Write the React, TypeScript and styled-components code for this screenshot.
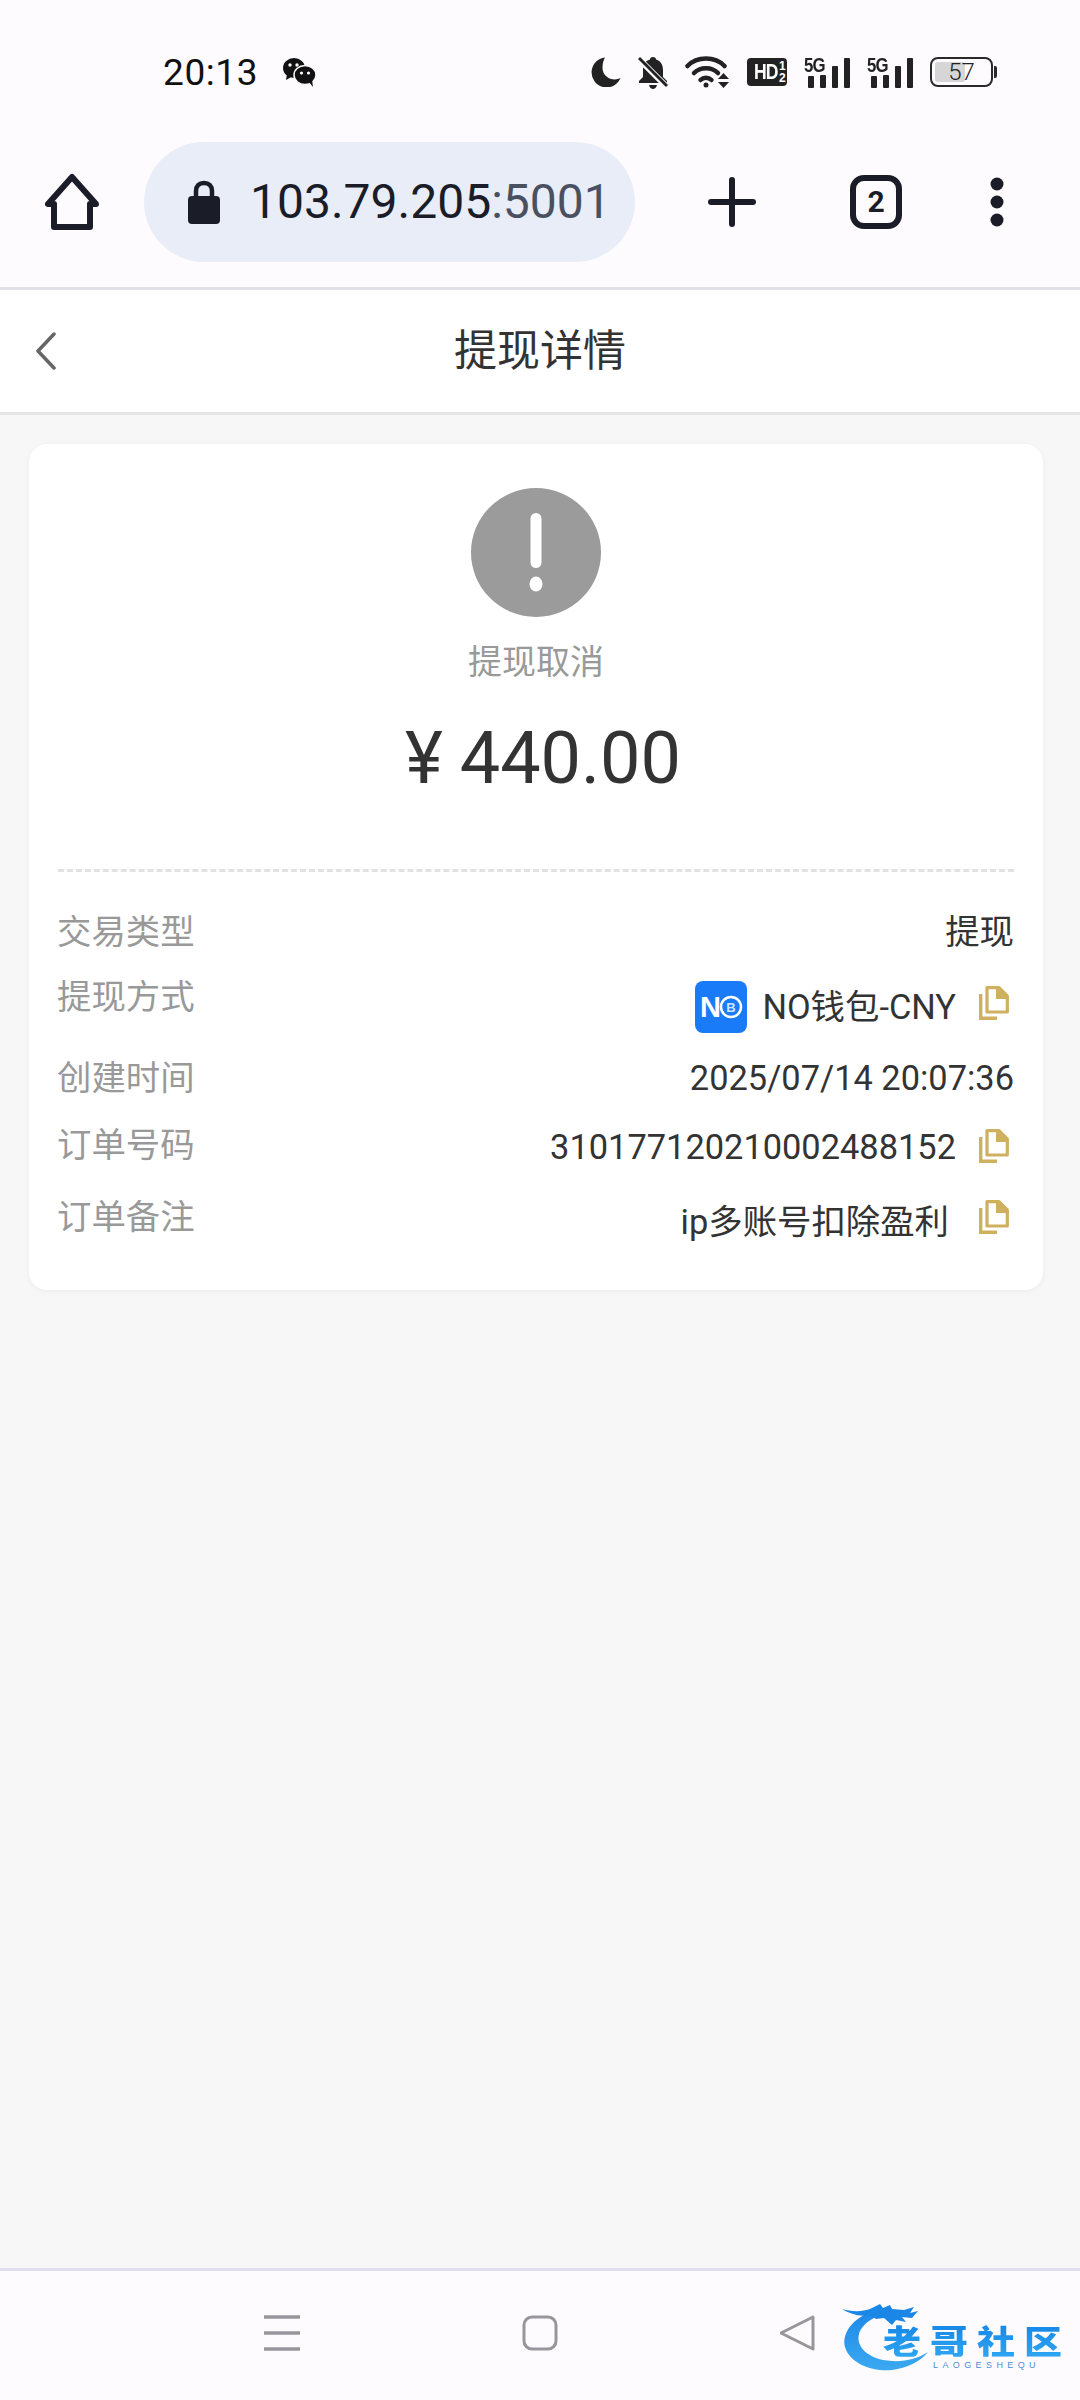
import React from 'react';
import styled, { createGlobalStyle } from 'styled-components';

const GlobalStyle = createGlobalStyle`
	html, body {
		margin: 0;
		padding: 0;
		background: #f7f7f7;
	}
	* {
		box-sizing: border-box;
	}
`;

const Page = styled.div`
	width: 1080px;
	height: 2400px;
	display: flex;
	flex-direction: column;
	background: #f7f7f7;
	font-family: Roboto, 'Noto Sans CJK SC', sans-serif;
	color: #333;
	overflow: hidden;
`;

const Chrome = styled.div`
	flex-shrink: 0;
	background: #fdfbfe;
	border-bottom: 3px solid #e0e0e6;
`;

const StatusBar = styled.div`
	height: 142px;
	padding: 2px 83px 0 163px;
	display: flex;
	align-items: center;
	justify-content: space-between;
	color: #1c1c1e;
`;

const StatusLeft = styled.div`
	display: flex;
	align-items: center;
	gap: 24px;
`;

const Clock = styled.span`
	font-size: 37px;
	line-height: 1;
	letter-spacing: 0.6px;
	color: #111;
`;

const StatusIcons = styled.div`
	display: flex;
	align-items: center;
	gap: 17px;
`;

const HdBadge = styled.div`
	width: 40px;
	height: 28px;
	background: #222;
	border-radius: 4px;
	color: #fff;
	display: flex;
	align-items: center;
	justify-content: center;
	font-family: 'Liberation Sans', sans-serif;
	font-weight: 700;
	line-height: 1;
`;

const HdText = styled.span`
	font-size: 22px;
	letter-spacing: -1px;
	transform: scaleX(0.8);
	transform-origin: right center;
`;

const HdFraction = styled.span`
	display: flex;
	flex-direction: column;
	font-size: 12px;
	line-height: 12px;
	margin-left: 1px;
`;

const Signal = styled.div`
	width: 46px;
	height: 32px;
	display: flex;
	align-items: flex-end;
	position: relative;
	gap: 6px;
	justify-content: flex-end;
`;

const SignalLabel = styled.span`
	position: absolute;
	left: 0;
	top: -2px;
	font-family: 'Liberation Sans', sans-serif;
	font-size: 21px;
	font-weight: 700;
	line-height: 1;
	letter-spacing: -1px;
	color: #222;
	transform: scaleX(0.8);
	transform-origin: left center;
`;

const SignalBar = styled.span<{ $h: number }>`
	width: 6px;
	height: ${(p) => p.$h}px;
	background: #222;
	border-radius: 1px;
`;

const Battery = styled.div`
	width: 67px;
	height: 30px;
	display: flex;
	align-items: center;
	gap: 1px;
`;

const BatteryBody = styled.div`
	position: relative;
	width: 63px;
	height: 30px;
	border: 2.5px solid #2a2a2a;
	border-radius: 8px;
	padding: 3px;
`;

const BatteryFill = styled.div`
	height: 100%;
	background: #d6d6d6;
	border-radius: 3px;
`;

const BatteryText = styled.span`
	position: absolute;
	inset: 0;
	display: flex;
	align-items: center;
	justify-content: center;
	font-size: 24px;
	line-height: 1;
	font-weight: 300;
	color: #222;
`;

const BatteryNub = styled.span`
	width: 3px;
	height: 12px;
	background: #2a2a2a;
	border-radius: 0 2px 2px 0;
`;

const Toolbar = styled.div`
	height: 145px;
	padding-bottom: 25px;
	display: grid;
	grid-template-columns: 144px 491px 194px 94px 148px;
	align-items: center;
	justify-items: center;
`;

const UrlPill = styled.div`
	width: 100%;
	height: 120px;
	border-radius: 60px;
	background: #e8edf8;
	padding-left: 44px;
	display: flex;
	align-items: center;
	gap: 30px;
	overflow: hidden;
`;

const UrlText = styled.span`
	font-size: 48px;
	line-height: 1;
	color: #1a1c28;
	white-space: nowrap;
`;

const UrlPort = styled.span`
	color: #4a5060;
`;

const TabCount = styled.div`
	width: 52px;
	height: 54px;
	border: 6px solid #1a1c28;
	border-radius: 14px;
	display: flex;
	align-items: center;
	justify-content: center;
	font-size: 30px;
	font-weight: 700;
	line-height: 1;
	color: #1a1c28;
`;

const Header = styled.div`
	flex-shrink: 0;
	height: 125px;
	background: #fff;
	border-bottom: 3px solid #e6e6e6;
	padding: 0 0 0 35px;
	display: grid;
	grid-template-columns: 1fr auto 1fr;
	align-items: center;
`;

const Title = styled.h1`
	margin: 0 0 0 -35px;
	font-size: 43px;
	font-weight: 400;
	line-height: 1;
	color: #333;
`;

const Main = styled.div`
	flex: 1;
	padding: 29px 37px 0 29px;
`;

const Card = styled.div`
	height: 846px;
	background: #fff;
	border-radius: 18px;
	box-shadow: 0 1px 6px rgba(0, 0, 0, 0.05);
	padding: 44px 29px 0 29px;
`;

const Summary = styled.div`
	display: flex;
	flex-direction: column;
	align-items: center;
	padding-bottom: 68px;
	border-bottom: 3px dashed #e2e2e2;
`;

const StatusName = styled.div`
	margin-top: 25px;
	font-size: 34px;
	line-height: 40px;
	color: #999;
`;

const Amount = styled.div`
	margin-top: 35px;
	padding-left: 14px;
	font-size: 72px;
	line-height: 84px;
	color: #333;
	word-spacing: -1px;
`;

const Rows = styled.div`
	padding-top: 38px;
	display: flex;
	flex-direction: column;
	gap: 21px;
`;

const Row = styled.div<{ $minH?: number }>`
	display: flex;
	justify-content: space-between;
	align-items: flex-start;
	min-height: ${(p) => p.$minH ?? 44}px;
`;

const Label = styled.span`
	font-size: 34.4px;
	line-height: 44px;
	color: #999;
	margin-left: -1px;
`;

const Value = styled.div<{ $gap?: number }>`
	display: flex;
	align-items: flex-start;
	gap: ${(p) => p.$gap ?? 23}px;
	font-size: 34.4px;
	line-height: 44px;
	color: #333;
`;

const ValueText = styled.span<{ $top?: number }>`
	padding-top: ${(p) => p.$top ?? 0}px;
	white-space: nowrap;
`;

const CopyButton = styled.span<{ $top: number }>`
	display: flex;
	width: 30px;
	height: 34px;
	margin: ${(p) => p.$top}px 5px 0 0;
`;

const Method = styled.span`
	display: flex;
	align-items: center;
	gap: 15px;
	padding-top: 6px;
	white-space: nowrap;
`;

const BottomNav = styled.div`
	position: relative;
	flex-shrink: 0;
	height: 132px;
	background: #fdfbfe;
	border-top: 3px solid #e0e0ec;
	padding-bottom: 6px;
	display: grid;
	grid-template-columns: repeat(3, 258px);
	justify-content: center;
	justify-items: center;
	align-items: center;
`;

const Watermark = styled.div`
	position: absolute;
	left: 842px;
	top: 31px;
	width: 230px;
	height: 76px;
`;

const WatermarkName = styled.span`
	position: absolute;
	left: 41px;
	top: 19px;
	font-family: 'Noto Sans CJK SC', sans-serif;
	font-size: 38px;
	font-weight: 900;
	line-height: 38px;
	letter-spacing: 9px;
	white-space: nowrap;
	background: linear-gradient(180deg, #1686e6, #2ea6f2);
	-webkit-background-clip: text;
	background-clip: text;
	color: transparent;
	transform: scaleY(0.88);
`;

const WatermarkSub = styled.span`
	position: absolute;
	left: 91px;
	top: 58px;
	font-family: 'Liberation Sans', sans-serif;
	font-size: 9px;
	line-height: 10px;
	letter-spacing: 4.4px;
	color: #4a90d8;
	white-space: nowrap;
`;

function Moon() {
	return (
		<svg width="30" height="30" viewBox="0 0 30 30" fill="#222">
			<path d="M14 0.5 A15 15 0 1 0 29.5 21 C22 25 11 20 11.5 10 C11.7 6 12.5 3 14 0.5Z" />
		</svg>
	);
}

function BellOff() {
	return (
		<svg width="30" height="33" viewBox="0 0 30 33">
			<path
				fill="#222"
				d="M15 1 C17 1 18 2 18 3.5 C23 5 25 9 25 14 V21 L29 25 V27 H1 V25 L5 21 V14 C5 9 7 5 12 3.500 C12 2 13 1 15 1Z M11 29 H19 C18.500 31.500 16.500 33 15 33 C13.500 33 11.500 31.500 11 29Z"
			/>
			<path d="M1 3 L29 31" stroke="#fdfbfe" strokeWidth="6" />
			<path d="M1 2 L29 30" stroke="#222" strokeWidth="3" />
		</svg>
	);
}

function Wifi() {
	return (
		<svg width="45" height="32" viewBox="0 0 45 32" fill="none" stroke="#222" strokeWidth="4.500" strokeLinecap="round">
			<path d="M2.500 10 C12 0 30 0 39.500 10" />
			<path d="M9 17 C15 10.500 27 10.500 33 17" />
			<path d="M15.500 24 C18.500 21 23.500 21 26.500 24" />
			<circle cx="21" cy="29" r="2.500" fill="#222" stroke="none" />
			<path d="M33 23 L38.500 17 L44 23Z M33 26 H44 L38.500 32Z" fill="#222" stroke="none" />
		</svg>
	);
}

function WeChat() {
	return (
		<svg width="34" height="30" viewBox="0 0 34 30">
			<ellipse cx="12" cy="11" rx="11" ry="10" fill="#111" />
			<path d="M5 17 L4 23 L11 19Z" fill="#111" />
			<circle cx="8" cy="8" r="1.700" fill="#fdfbfe" />
			<circle cx="15" cy="8" r="1.700" fill="#fdfbfe" />
			<ellipse cx="23" cy="18" rx="11" ry="9.500" fill="#111" stroke="#fdfbfe" strokeWidth="1.500" />
			<path d="M27 25 L31 30 L30 23Z" fill="#111" />
			<circle cx="19.500" cy="16" r="1.600" fill="#fdfbfe" />
			<circle cx="26.500" cy="16" r="1.600" fill="#fdfbfe" />
		</svg>
	);
}

function SignalIcon() {
	return (
		<Signal>
			<SignalLabel>5G</SignalLabel>
			<SignalBar $h={12} />
			<SignalBar $h={13} />
			<SignalBar $h={22} />
			<SignalBar $h={30} />
		</Signal>
	);
}

function HomeIcon() {
	return (
		<svg width="54" height="58" viewBox="0 0 54 58" fill="none" stroke="#1a1c28" strokeWidth="6" strokeLinejoin="round">
			<path d="M27 4 L3 31 H9 V54 H45 V31 H51 Z" />
		</svg>
	);
}

function LockIcon() {
	return (
		<svg width="32" height="44" viewBox="0 0 32 44">
			<path d="M8 18 V11 C8 6 11 3 16 3 C21 3 24 6 24 11 V18" fill="none" stroke="#1a1c28" strokeWidth="4.500" />
			<rect x="0" y="16" width="32" height="28" rx="4" fill="#1a1c28" />
		</svg>
	);
}

function PlusIcon() {
	return (
		<svg width="48" height="50" viewBox="0 0 48 50" stroke="#1a1c28" strokeWidth="6" strokeLinecap="round">
			<path d="M24 3 V47 M3 25 H45" />
		</svg>
	);
}

function MoreIcon() {
	return (
		<svg width="14" height="50" viewBox="0 0 14 50" fill="#1a1c28">
			<circle cx="7" cy="7" r="6.500" />
			<circle cx="7" cy="25" r="6.500" />
			<circle cx="7" cy="43" r="6.500" />
		</svg>
	);
}

function BackIcon() {
	return (
		<svg width="22" height="38" viewBox="0 0 22 38" fill="none" stroke="#666" strokeWidth="3.500" strokeLinecap="round" strokeLinejoin="round">
			<path d="M19 2 L3 19 L19 36" />
		</svg>
	);
}

function AlertIcon() {
	return (
		<svg width="130" height="129" viewBox="0 0 130 129">
			<ellipse cx="65" cy="64.500" rx="65" ry="64.500" fill="#9b9b9b" />
			<rect x="59.500" y="25" width="11" height="55" rx="5.500" fill="#fff" />
			<ellipse cx="65" cy="96" rx="6.500" ry="7.500" fill="#fff" />
		</svg>
	);
}

function CopyIcon({ top = 5 }: { top?: number }) {
	return (
		<CopyButton $top={top}>
			<svg width="30" height="34" viewBox="0 0 30 34" fill="none">
				<path d="M1.700 8 V32.300 H18" stroke="#cfb05e" strokeWidth="3.400" />
				<path d="M8 1.700 H20 L28.300 10 V26 H8 Z" stroke="#cfb05e" strokeWidth="3.200" strokeLinejoin="round" />
				<path d="M17 1 L30 12 V13 H17 Z" fill="#cfb05e" />
			</svg>
		</CopyButton>
	);
}

function WalletLogo() {
	return (
		<svg width="52" height="52" viewBox="0 0 52 52">
			<rect width="52" height="52" rx="8" fill="#1a7bf8" />
			<text x="5" y="36" fontFamily="'Liberation Sans', sans-serif" fontSize="29" fontWeight="700" fill="#fff">
				N
			</text>
			<circle cx="36" cy="26" r="10" fill="none" stroke="#fff" strokeWidth="2.500" />
			<text x="36" y="31" textAnchor="middle" fontFamily="'Liberation Sans', sans-serif" fontSize="13" fontWeight="700" fill="#cfe4ff">
				B
			</text>
		</svg>
	);
}

function MenuIcon() {
	return (
		<svg width="36" height="36" viewBox="0 0 36 36" stroke="#98969c" strokeWidth="3.500">
			<path d="M0 2 H36 M0 18 H36 M0 34 H36" />
		</svg>
	);
}

function SquareIcon() {
	return (
		<svg width="36" height="36" viewBox="0 0 36 36" fill="none" stroke="#98969c" strokeWidth="3">
			<rect x="2" y="2" width="32" height="32" rx="8" />
		</svg>
	);
}

function TriangleIcon() {
	return (
		<svg width="36" height="38" viewBox="0 0 36 38" fill="none" stroke="#98969c" strokeWidth="3" strokeLinejoin="round">
			<path d="M33 3 V35 L1 19 Z" />
		</svg>
	);
}

function DragonMark() {
	return (
		<svg width="110" height="76" viewBox="0 0 110 76" style={{ position: 'absolute', left: 0, top: 0 }}>
			<defs>
				<linearGradient id="swoosh" x1="0" y1="0" x2="0" y2="1">
					<stop offset="0" stopColor="#1e8ae8" />
					<stop offset="1" stopColor="#3ba9f0" />
				</linearGradient>
			</defs>
			<path
				fill="url(#swoosh)"
				d="M24 12 C8 20 0 33 3 45 C8 62 31 70 50 68 C65 66 78 60 86 50 C74 58 58 61 41 58 C24 54 14 44 17 32 C18 26 26 18 36 14 Z"
			/>
			<path
				fill="#1a86e6"
				d="M0 7 C10 10 22 10 30 6 L38 2 L41 6 L48 3 L50 7 L62 8 L72 5 L68 11 L76 9 L70 16 L60 15 L64 20 L54 18 L50 23 L42 16 L34 17 L28 13 C18 15 8 12 0 7 Z"
			/>
		</svg>
	);
}

export default function App() {
	return (
		<Page>
			<GlobalStyle />
			<Chrome>
				<StatusBar>
					<StatusLeft>
						<Clock>20:13</Clock>
						<WeChat />
					</StatusLeft>
					<StatusIcons>
						<Moon />
						<BellOff />
						<Wifi />
						<HdBadge>
							<HdText>HD</HdText>
							<HdFraction>
								<span>1</span>
								<span>2</span>
							</HdFraction>
						</HdBadge>
						<SignalIcon />
						<SignalIcon />
						<Battery>
							<BatteryBody>
								<BatteryFill style={{ width: '57%' }} />
								<BatteryText>57</BatteryText>
							</BatteryBody>
							<BatteryNub />
						</Battery>
					</StatusIcons>
				</StatusBar>
				<Toolbar>
					<HomeIcon />
					<UrlPill>
						<LockIcon />
						<UrlText>
							103.79.205<UrlPort>:5001</UrlPort>
						</UrlText>
					</UrlPill>
					<PlusIcon />
					<TabCount>2</TabCount>
					<MoreIcon />
				</Toolbar>
			</Chrome>
			<Header>
				<BackIcon />
				<Title>提现详情</Title>
			</Header>
			<Main>
				<Card>
					<Summary>
						<AlertIcon />
						<StatusName>提现取消</StatusName>
						<Amount>¥ 440.00</Amount>
					</Summary>
					<Rows>
						<Row>
							<Label>交易类型</Label>
							<Value>提现</Value>
						</Row>
						<Row $minH={60}>
							<Label>提现方式</Label>
							<Value>
								<Method>
									<WalletLogo />
									NO钱包-CNY
								</Method>
								<CopyIcon top={11} />
							</Value>
						</Row>
						<Row $minH={46}>
							<Label>创建时间</Label>
							<Value>2025/07/14 20:07:36</Value>
						</Row>
						<Row $minH={51}>
							<Label>订单号码</Label>
							<Value>
								<ValueText $top={2}>310177120210002488152</ValueText>
								<CopyIcon top={6} />
							</Value>
						</Row>
						<Row>
							<Label>订单备注</Label>
							<Value $gap={30}>
								<ValueText $top={5}>ip多账号扣除盈利</ValueText>
								<CopyIcon />
							</Value>
						</Row>
					</Rows>
				</Card>
			</Main>
			<BottomNav>
				<MenuIcon />
				<SquareIcon />
				<TriangleIcon />
				<Watermark>
					<DragonMark />
					<WatermarkName>老哥社区</WatermarkName>
					<WatermarkSub>LAOGESHEQU</WatermarkSub>
				</Watermark>
			</BottomNav>
		</Page>
	);
}
